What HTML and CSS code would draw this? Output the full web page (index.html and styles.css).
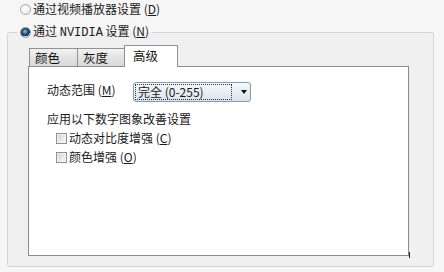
FILE: index.html
```html
<!DOCTYPE html>
<html lang="zh-CN">
<head>
    <meta charset="UTF-8">
    <title>NVIDIA 设置</title>
    <link rel="stylesheet" href="styles.css">
</head>
<body>
    <div class="dialog">
        <label class="option">
            <span class="radio"></span>
            <span>通过视频播放器设置 (<u>D</u>)</span>
        </label>

        <fieldset class="group">
            <legend class="option">
                <span class="radio checked"></span>
                <span>通过 <span class="mono">NVIDIA</span> 设置 (<u>N</u>)</span>
            </legend>

            <div class="group-body">
                <!-- tab strip -->
                <div class="tabs">
                    <div class="tab">颜色</div>
                    <div class="tab">灰度</div>
                    <div class="tab active">高级</div>
                </div>

                <div class="panel">
                    <div class="field">
                        <span class="field-label">动态范围 (<u>M</u>)</span>
                        <div class="combo">
                            <span class="combo-text">完全 (0-255)</span>
                            <span class="combo-arrow"></span>
                        </div>
                    </div>

                    <div class="section-title">应用以下数字图象改善设置</div>

                    <label class="check-row">
                        <span class="check"></span>
                        <span>动态对比度增强 (<u>C</u>)</span>
                    </label>
                    <label class="check-row">
                        <span class="check"></span>
                        <span>颜色增强 (<u>O</u>)</span>
                    </label>
                </div>
            </div>
        </fieldset>
    </div>
</body>
</html>
```

FILE: styles.css
```css
body {
    margin: 0;
    background: #f6f6f6;
    color: #1a1a1a;
    font-family: "Noto Sans CJK SC", "Noto Sans", sans-serif;
    font-size: 12px;
}

u {
    text-decoration-thickness: 1px;
    text-underline-offset: 1px;
}

.mono {
    font-family: "Liberation Mono", monospace;
    font-size: 12px;
}

.dialog {
    height: 272px;
    box-sizing: border-box;
    padding: 3px 10px 5px 7px;
    display: flex;
    flex-direction: column;
}

.option {
    display: flex;
    align-items: center;
    gap: 2px;
    height: 12px;
    line-height: 12px;
    padding-left: 13px;
}

legend.option {
    height: 14px;
    line-height: 14px;
    margin-left: 9px;
    padding: 0 3px;
}

.radio {
    width: 9px;
    height: 9px;
    border: 1px solid #a4a7ab;
    border-radius: 50%;
    background: radial-gradient(circle at 40% 35%, #ffffff, #e4e4e4);
    flex: none;
}

.radio.checked {
    border-color: #8a8e93;
    background: radial-gradient(circle at 45% 40%, #8cc3ee 0, #2d5c8c 35%, #0c2440 62%, #e8ecef 66%, #f7f7f7 100%);
}

.group {
    flex: 1;
    margin: 10px 0 0 0;
    padding: 0;
    border: 1px solid #d2d4d7;
    border-radius: 3px;
    background: #f0f0f0;
    min-width: 0;
}

.group-body {
    padding: 6px 24px 10px 20px;
}

.tabs {
    display: flex;
    align-items: flex-end;
    height: 21px;
    margin-left: 1px;
}

.tab {
    height: 17px;
    line-height: 17px;
    box-sizing: content-box;
    padding: 0 5px;
    border: 1px solid #8e9196;
    border-bottom: none;
    background: linear-gradient(#f2f2f2, #e3e3e3 50%, #d9d9d9);
    margin-left: -1px;
    color: #111;
    font-size: 12.5px;
}

.tab:nth-child(1) {
    width: 37px;
    margin-left: 0;
}

.tab:nth-child(2) {
    width: 36px;
}

.tab.active {
    width: 36px;
    height: 21px;
    line-height: 20px;
    padding: 0 8px;
    background: #ffffff;
    margin-bottom: -1px;
    position: relative;
    z-index: 1;
}

.panel {
    height: 173px;
    width: 361px;
    border: 1px solid #898c95;
    background: #ffffff;
    padding: 15px 0 0 18px;
    box-sizing: content-box;
    position: relative;
}

/* small dark tick at the corner, as in the capture */
.panel::after {
    content: "";
    position: absolute;
    right: -2px;
    bottom: -3px;
    width: 1px;
    height: 6px;
    background: #222;
}

.field {
    display: flex;
    align-items: flex-start;
    height: 20px;
    padding-top: 1px;
}

.field-label {
    width: 86px;
    line-height: 14px;
}

.combo {
    width: 116px;
    height: 18px;
    border: 1px solid #7f9db9;
    border-radius: 3px;
    background: linear-gradient(#f7f9fb, #e8eef3 50%, #dbe4ec);
    display: flex;
    align-items: center;
    margin-top: -1px;
}

.combo-text {
    width: 93px;
    height: 14px;
    line-height: 14px;
    margin-left: 1px;
    padding-left: 2px;
    border: 1px dotted #333;
    font-size: 12px;
}

.combo-arrow {
    margin-left: 9px;
    width: 0;
    height: 0;
    border-left: 3.5px solid transparent;
    border-right: 3.5px solid transparent;
    border-top: 4px solid #111;
}

.section-title {
    margin-top: 9px;
    line-height: 14px;
}

.check-row {
    display: flex;
    align-items: center;
    gap: 2px;
    height: 14px;
    line-height: 14px;
    margin-top: 5px;
    padding-left: 9px;
}

.check {
    width: 9px;
    height: 9px;
    border: 1px solid #8e8f8f;
    background: linear-gradient(135deg, #cfcfcf, #eeeeee 70%, #f6f6f6);
    box-shadow: inset 0 0 0 1px #f4f4f4;
    flex: none;
}
```
